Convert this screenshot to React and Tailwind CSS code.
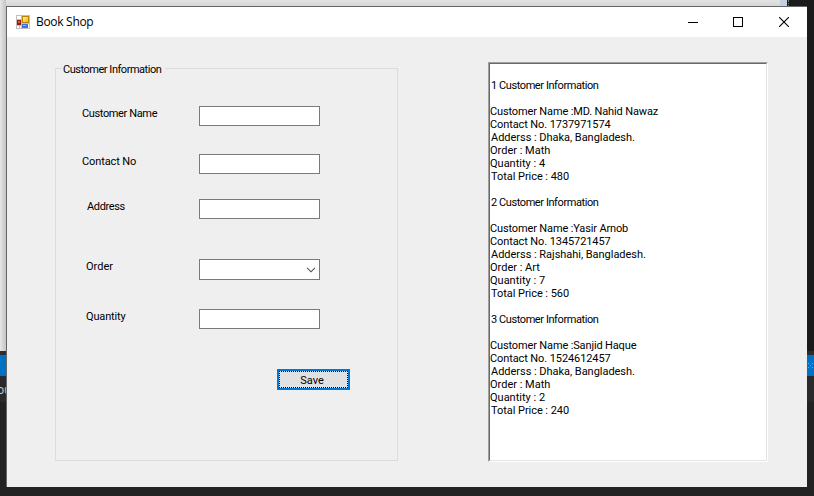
import React from "react";

const labelFont = "font-['Roboto','Liberation_Sans',sans-serif]";

const records = [
  { id: 1, name: "MD. Nahid Nawaz", contact: "1737971574", address: "Dhaka, Bangladesh.", order: "Math", quantity: 4, total: 480 },
  { id: 2, name: "Yasir Arnob", contact: "1345721457", address: "Rajshahi, Bangladesh.", order: "Art", quantity: 7, total: 560 },
  { id: 3, name: "Sanjid Haque", contact: "1524612457", address: "Dhaka, Bangladesh.", order: "Math", quantity: 2, total: 240 },
];

function AppIcon() {
  return (
    <svg width="14" height="14" viewBox="0 0 14 14" shapeRendering="crispEdges">
      <defs>
        <linearGradient id="gold" x1="0" y1="0" x2="1" y2="1">
          <stop offset="0" stopColor="#fff0a0" />
          <stop offset="1" stopColor="#f4b400" />
        </linearGradient>
      </defs>
      <rect width="14" height="14" fill="#c0c0c0" />
      <path d="M1 1h4v3H1zM1 11h2v2H1zM4 11h1v2H4zM12 9h1v4h-1z" fill="#fff" />
      <rect x="6" y="1" width="7" height="7" fill="#b8860b" />
      <rect x="7" y="2" width="5" height="5" fill="url(#gold)" />
      <rect x="1" y="5" width="4" height="5" fill="#9c1a12" />
      <rect x="2" y="6" width="2" height="2" fill="#d4574c" />
      <rect x="6" y="9" width="6" height="4" fill="#3b74e0" />
      <rect x="7" y="10" width="3" height="1" fill="#8db8ff" />
    </svg>
  );
}

function TitleBar() {
  return (
    <header className="flex h-[30px] items-center bg-white pl-[9px]">
      <AppIcon />
      <h1 className="ml-[6px] flex-1 font-['Open_Sans','Noto_Sans',sans-serif] text-[12px] leading-[30px] tracking-[-0.3px] text-black">
        Book Shop
      </h1>
      <div className="flex">
        <span className="flex h-[30px] w-[45px] items-center justify-center">
          <svg width="10" height="10" shapeRendering="crispEdges"><path d="M0 5.5h10" stroke="#000" /></svg>
        </span>
        <span className="flex h-[30px] w-[45px] items-center justify-center">
          <svg width="10" height="10" shapeRendering="crispEdges"><path d="M.5.5h9v9h-9z" fill="none" stroke="#000" /></svg>
        </span>
        <span className="flex h-[30px] w-[47px] items-center justify-center">
          <svg width="10" height="10"><path d="M0 0l10 10M10 0L0 10" stroke="#000" strokeWidth="1.1" /></svg>
        </span>
      </div>
    </header>
  );
}

function Field({ label, labelClass, rowClass, select }) {
  return (
    <div className={`flex ${rowClass}`}>
      <label className={`h-[13px] ${labelClass}`}>{label}</label>
      <div className={`flex w-[121px] items-center justify-end border border-[#7a7a7a] bg-white ${select ? "h-[21px]" : "h-5"}`}>
        {select && (
          <svg width="10" height="6" className="mr-[3px]" fill="none" stroke="#505050" strokeWidth="1.1">
            <path d="M1 .8l4 4 4-4" />
          </svg>
        )}
      </div>
    </div>
  );
}

function CustomerForm() {
  return (
    <section className="mt-[25px] ml-[48px] flex h-[399px] w-[343px] flex-col">
      <div className="flex h-[13px] items-center">
        <span className="h-px w-[7px] bg-[#dcdcdc]" />
        <h2 className="w-[103px] pt-[2px] pl-px tracking-[-0.47px] whitespace-nowrap">Customer Information</h2>
        <span className="h-px flex-1 bg-[#dcdcdc]" />
      </div>
      <div className="-mt-[7px] flex flex-1 flex-col border border-t-0 border-[#dcdcdc]">
        <Field label="Customer Name" labelClass="ml-[26px] mt-[1px] w-[117px] tracking-[-0.37px]" rowClass="mt-[38px]" />
        <Field label="Contact No" labelClass="ml-[26px] mt-[1px] w-[117px] tracking-[-0.1px]" rowClass="mt-[28px]" />
        <Field label="Address" labelClass="ml-[31px] mt-[1px] w-[112px] tracking-[-0.35px]" rowClass="mt-[25px]" />
        <Field label="Order" labelClass="ml-[30px] mt-[1px] w-[113px]" rowClass="mt-[40px]" select />
        <Field label="Quantity" labelClass="ml-[30px] mt-[1px] w-[113px] tracking-[-0.15px]" rowClass="mt-[29px]" />
        <button className="mt-[40px] ml-[221px] h-[21px] w-[73px] border-2 border-[#0078d7] bg-[#e1e1e1]">
          <span className="flex h-full items-center justify-center border border-dotted border-black pt-[2px] pr-[3px]">Save</span>
        </button>
      </div>
    </section>
  );
}

function Output() {
  return (
    <section className="mt-[25px] ml-[90px] h-[400px] w-[280px] border border-t-[#a0a0a0] border-r-white border-b-white border-l-[#a0a0a0]">
      <div className="h-full border border-t-[#696969] border-r-[#e3e3e3] border-b-[#e3e3e3] border-l-[#696969] bg-white pt-[2px]">
        {records.map((r) => (
          <article key={r.id} className="whitespace-pre">
            <h3 className="pt-[13px] pb-[13px] pl-px tracking-[-0.42px]">{r.id} Customer Information</h3>
            <p className="tracking-[-0.14px]">Customer Name :{r.name}</p>
            <p className="tracking-[-0.1px]">Contact No. {r.contact}</p>
            <p className="pl-px tracking-[-0.03px]">Adderss : {r.address}</p>
            <p>Order : {r.order}</p>
            <p>Quantity : {r.quantity}</p>
            <p className="pl-px tracking-[-0.05px]">Total Price : {r.total}</p>
          </article>
        ))}
      </div>
    </section>
  );
}

function Backdrop() {
  return (
    <div className="absolute inset-0 flex flex-col bg-[#222222]">
      <div className="flex h-[351px] bg-[#1b1b1b]">
        <div className="w-[6px] bg-linear-to-r from-[#e6e6e6] to-[#c4c4c4]" />
        <div className="h-[6px] w-[774px] bg-linear-to-b from-[#e4e4e4] to-[#d6d6d6]" />
        <div className="h-[6px] w-[7px] bg-[#c5d0e2]" />
        <div className="ml-px h-[6px] w-px border-l border-dotted border-[#777777]" />
      </div>
      <div className="h-1 bg-[#2d2d30]" />
      <div className="flex h-[21px] items-center justify-end bg-[#0072c6]">
        <svg width="6" height="5" fill="#5aa7e0" shapeRendering="crispEdges">
          <path d="M0 0h1v1H0zM4 0h1v1H4zM2 2h1v1H2zM0 4h1v1H0zM4 4h1v1H4z" />
        </svg>
      </div>
      <div className="h-[26px] bg-[#2a2a2d] pt-[7px] font-['Open_Sans',sans-serif] text-[12px] leading-[14px] text-[#d0d0d0]">
        <span className="-ml-[3px]">ou</span>
      </div>
    </div>
  );
}

export default function App() {
  return (
    <div className="relative h-[496px] w-[814px] overflow-hidden">
      <Backdrop />
      <div className="relative pt-[6px] pl-[6px]">
        <main className={`flex h-[481px] w-[801px] flex-col border-t border-l border-[#666666] bg-[#efefef] text-[11px] leading-[13px] text-black ${labelFont}`}>
          <TitleBar />
          <div className="flex flex-1">
            <CustomerForm />
            <Output />
          </div>
        </main>
      </div>
    </div>
  );
}
